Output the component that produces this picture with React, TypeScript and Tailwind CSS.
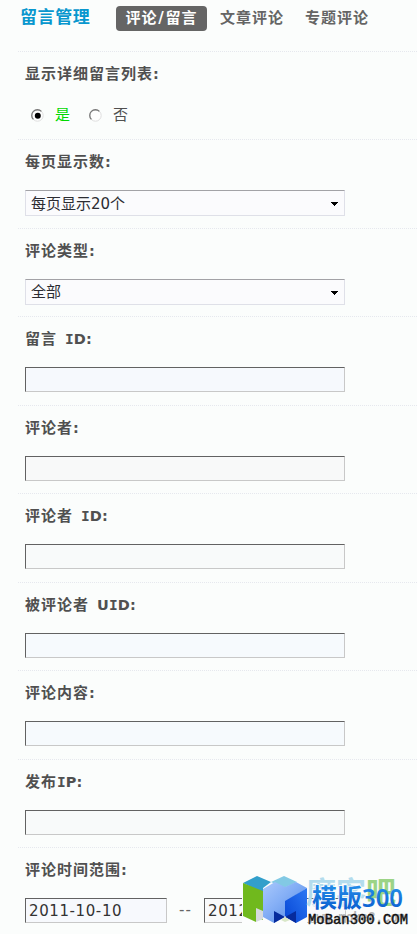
import React from "react";

function Label({ zh, latin = "", gap = false }: { zh: string; latin?: string; gap?: boolean }) {
  return (
    <div className="flex h-[22px] items-center whitespace-pre text-[15px] leading-[22px] font-bold tracking-[1px] text-[#505050]">
      <span>{zh}</span>
      <span className={gap ? "ml-[8px] text-[14.5px] tracking-[0.1px]" : "text-[14.5px] tracking-[0.1px]"}>
        {latin.split("").map((c, i) => (
          <span key={i} className={c === "I" ? "font-['DejaVu_Sans_Mono']" : ""}>{c}</span>
        ))}
        :
      </span>
    </div>
  );
}

function Row({ children }: { children: React.ReactNode }) {
  return (
    <section className="ml-[18px] h-[88.44px] border-t border-dotted border-[#e6e8ee] pt-[11px] pl-[7px]">
      {children}
    </section>
  );
}

function Select({ value }: { value: string }) {
  return (
    <div className="mt-[17px] flex h-[26px] w-[320px] items-center justify-between border border-[#dfe0e8] border-t-[#a2a2a6] bg-[#fbfbfd] pr-[6px] pl-[5px] text-[15px] leading-[24px] text-[#2c2c32]">
      <span className="pt-px">{value}</span>
      <svg className="mt-[2px]" width="7" height="4" viewBox="0 0 7 4" shapeRendering="crispEdges">
        <path d="M0 0H7V1H6V2H5V3H4V4H3V3H2V2H1V1H0Z" fill="#000" />
      </svg>
    </div>
  );
}

const fieldClass =
  "h-[25px] border border-[#c8c8c8] border-t-[#626262] border-l-[#626262] text-[15px] tracking-[0.6px] text-[#333] leading-[25px] pl-[3px]";

function Field({ tint }: { tint: string }) {
  return <div className={`mt-[17px] w-[320px] ${fieldClass} ${tint}`} />;
}

function Radio({ checked = false }: { checked?: boolean }) {
  return (
    <svg width="13" height="13" viewBox="0 0 13 13">
      <circle cx="6.5" cy="6.5" r="5.7" fill="#fefefe" stroke="#dedede" />
      <path d="M2.4 10.4A5.6 5.6 0 0 1 10.4 2.4" fill="none" stroke="#777" strokeWidth="1.3" />
      {checked && <circle cx="6.8" cy="6.8" r="3" fill="#000" />}
    </svg>
  );
}

function Watermark() {
  return (
    <div className="absolute top-[874px] left-[242px] h-[60px] w-[175px]">
      <svg width="175" height="60" viewBox="0 0 175 60">
        <defs>
          <linearGradient id="front" x1="0" y1="0" x2="1" y2="1">
            <stop offset="0" stopColor="#a9c8fb" />
            <stop offset="0.4" stopColor="#86b0f6" />
            <stop offset="1" stopColor="#4c84e4" />
          </linearGradient>
          <linearGradient id="side" x1="1" y1="0" x2="0" y2="1">
            <stop offset="0" stopColor="#2c78f4" />
            <stop offset="1" stopColor="#0645d4" />
          </linearGradient>
          <linearGradient id="word" x1="0" y1="0" x2="0" y2="1">
            <stop offset="0" stopColor="#2a9cf0" />
            <stop offset="1" stopColor="#0756cb" />
          </linearGradient>
        </defs>
        <path d="M0 20H65V49H104V51H0Z" fill="#fcfdfd" />
        <path d="M1 9L15 2L29 8L21 14V18L15 16Z" fill="#329fcb" />
        <path d="M1 9L21 17V46L14 43V34V48L1 42Z" fill="#70b91d" />
        <path d="M14 34L21 37V45L14 48Z" fill="#d6dade" />
        <path d="M29 8L42 2L55 8L42 14Z" fill="#82c9e4" />
        <path d="M21 15L33 8L43 13L54 8L65 14L43 28V42L32 49L21 43Z" fill="url(#front)" />
        <path d="M43 27L65 14V43L54 49L43 42Z" fill="url(#side)" />
        <path d="M32 37L43 43L32 49ZM54 37V49L43 43Z" fill="#062b9c" />
        <path d="M39 46L43 43L48 46L43 48Z" fill="#d9e7c8" />
        <g fontFamily="Noto Sans CJK SC, sans-serif" fontWeight="700">
          <text x="64" y="29" fontSize="30" textLength="60" fill="#b3dced">魔客</text>
          <text x="124" y="29" fontSize="30" fill="#9cd486">吧</text>
          <text x="67" y="48" fontFamily="Liberation Mono" fontSize="14" textLength="96" lengthAdjust="spacingAndGlyphs" fill="#b3b3b3">www.moke8.com</text>
          <text x="70" y="33" fontSize="25.5" textLength="50" lengthAdjust="spacingAndGlyphs" fill="url(#word)" stroke="#fcfdfd" strokeWidth="1.6" paintOrder="stroke">模版</text>
          <text x="120" y="33" fontFamily="Noto Sans" fontWeight="600" fontSize="25.5" textLength="41" lengthAdjust="spacingAndGlyphs" fill="url(#word)">300</text>
        </g>
        <text x="66" y="50" fontFamily="Liberation Mono" fontSize="15" textLength="100" lengthAdjust="spacingAndGlyphs" fill="#111" stroke="#111" strokeWidth="0.4">MoBan300.COM</text>
      </svg>
    </div>
  );
}

export default function App() {
  return (
    <main className="relative h-[934px] w-[417px] overflow-hidden bg-[#fbfdfc] font-['DejaVu_Sans','Noto_Sans_CJK_SC',sans-serif]">
      <header className="flex h-[51px] items-start pt-[6px] pl-[20px] font-bold">
        <h1 className="w-[96px] text-[17px] leading-[23px] tracking-[0.6px] text-[#0897ce]">留言管理</h1>
        <nav className="flex text-[15px] leading-[25px] tracking-[1px] text-[#656565]">
          <span className="flex h-[25px] w-[91px] justify-center rounded-[4px] bg-[#656565] text-white">
            评论<span className="mx-[0.7px]">/</span>留言
          </span>
          <span className="ml-[13px]">文章评论</span>
          <span className="ml-[21px]">专题评论</span>
        </nav>
      </header>
      <Row>
        <Label zh="显示详细留言列表" />
        <div className="mt-[18px] flex h-[25px] items-center pl-[6px] text-[15px] leading-[25px] text-[#505050]">
          <Radio checked />
          <span className="ml-[11px] text-[#00d900]">是</span>
          <span className="ml-[19px] flex"><Radio /></span>
          <span className="ml-[11px]">否</span>
        </div>
      </Row>
      <Row><Label zh="每页显示数" /><Select value="每页显示20个" /></Row>
      <Row><Label zh="评论类型" /><Select value="全部" /></Row>
      <Row><Label zh="留言" latin="ID" gap /><Field tint="bg-[#f6f9fd]" /></Row>
      <Row><Label zh="评论者" /><Field tint="bg-[#f8f9f9]" /></Row>
      <Row><Label zh="评论者" latin="ID" gap /><Field tint="bg-[#f8fafa]" /></Row>
      <Row><Label zh="被评论者" latin="UID" gap /><Field tint="bg-[#f6fafd]" /></Row>
      <Row><Label zh="评论内容" /><Field tint="bg-[#f6fafd]" /></Row>
      <Row><Label zh="发布" latin="IP" /><Field tint="bg-[#f8fafa]" /></Row>
      <Row>
        <Label zh="评论时间范围" />
        <div className="mt-[17px] flex items-center">
          <div className={`w-[142px] bg-[#f7f9fd] ${fieldClass}`}>2011-10-10</div>
          <span className="w-[37px] text-center text-[15px] leading-[25px] tracking-[1px] text-[#656565]">--</span>
          <div className={`w-[142px] bg-[#f9fafb] ${fieldClass}`}>2012</div>
        </div>
      </Row>
      <Watermark />
    </main>
  );
}
